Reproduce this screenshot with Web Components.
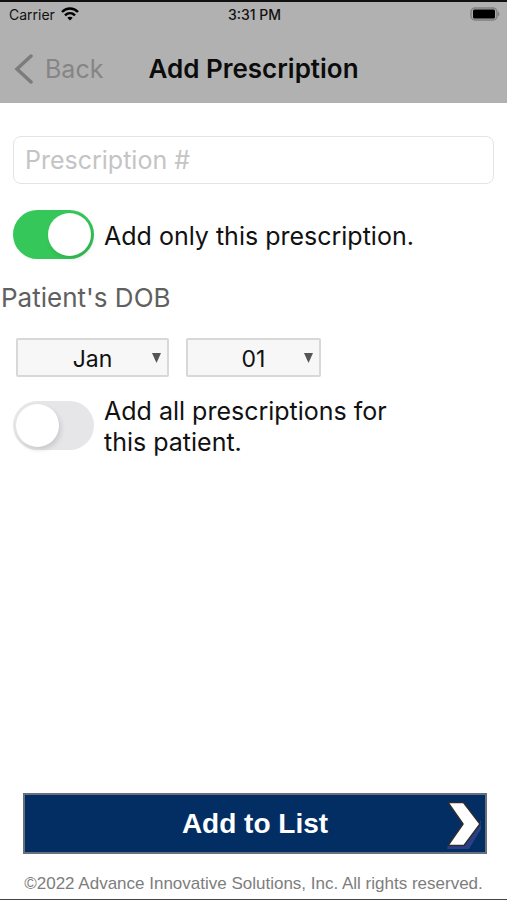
<!DOCTYPE html>
<html lang="en">
<head>
<meta charset="utf-8">
<meta name="viewport" content="width=device-width, initial-scale=1">
<title>Add Prescription</title>
<style>
  body {
    margin: 0;
    background: #fff;
    color: #111;
    font-family: Inter, "Liberation Sans", sans-serif;
    font-size: 25px;
  }
</style>
</head>
<body>
<rx-app></rx-app>

<script>
class StatusBar extends HTMLElement {
  constructor() {
    super();
    this.attachShadow({ mode: 'open' });
    this.render();
  }

  render() {
    this.shadowRoot.innerHTML = `
      <style>
        :host {
          display: grid;
          grid-template-columns: 1fr auto 1fr;
          align-items: center;
          height: 24px;
          padding: 0 7px 0 9px;
          font-size: 14px;
          color: #111;
        }
        .carrier { display: flex; align-items: center; gap: 6px; }
        .time { font-weight: 500; }
        .battery { justify-self: end; }
        svg { display: block; }
      </style>
      <span class="carrier">Carrier
        <svg width="18" height="14" viewBox="0 0 18 14" fill="none" stroke="#000" stroke-width="2.5" aria-hidden="true">
          <path d="M1 5C5.5.4 12.5.4 17 5"/>
          <path d="M4 8.400c2.900-2.800 7.100-2.800 10 0"/>
          <path d="M9 13.500 6.300 10.800c1.500-1.400 3.900-1.400 5.400 0Z" fill="#000" stroke="none"/>
        </svg>
      </span>
      <span class="time">3:31 PM</span>
      <svg class="battery" width="30" height="14" viewBox="0 0 30 14" aria-hidden="true">
        <rect x="1" y="1" width="26" height="12" rx="4" fill="#aaa" stroke="#808080" stroke-width="1.5"/>
        <rect x="3" y="2.500" width="22" height="9" rx="1.5" fill="#000"/>
        <path d="M28 4.500c2 1 2 4 0 5Z" fill="#808080"/>
      </svg>
    `;
  }
}

class NavBar extends HTMLElement {
  constructor() {
    super();
    this.attachShadow({ mode: 'open' });
    this.render();
  }

  render() {
    this.shadowRoot.innerHTML = `
      <style>
        :host {
          display: grid;
          grid-template-columns: 1fr auto 1fr;
          align-items: center;
          height: 69px;
          padding: 8px 14px 0;
        }
        button {
          display: flex;
          align-items: center;
          justify-self: start;
          gap: 12px;
          padding: 0;
          border: 0;
          background: none;
          font: inherit;
          color: #858585;
        }
        h1 { margin: 0; font-size: 26px; font-weight: 600; color: #0c0c0c; }
      </style>
      <button type="button">
        <svg width="19" height="30" viewBox="0 0 19 30" fill="none" stroke="#7c7c7c" stroke-width="3.5" stroke-linecap="round" aria-hidden="true">
          <path d="M17 2 3 15l14 13"/>
        </svg>
        Back
      </button>
      <h1><slot></slot></h1>
    `;
  }
}

class TextField extends HTMLElement {
  constructor() {
    super();
    this.attachShadow({ mode: 'open' });
    this.render();
  }

  get label() {
    return this.getAttribute('label');
  }

  render() {
    this.shadowRoot.innerHTML = `
      <style>
        :host { display: block; }
        input {
          display: block;
          box-sizing: border-box;
          width: 100%;
          height: 48px;
          padding: 0 11px;
          border: 1px solid #e4e4e4;
          border-radius: 8px;
          background: #fff;
          font: inherit;
          color: #111;
        }
        input::placeholder { color: #c4c4c6; opacity: 1; }
      </style>
      <input type="text" aria-label="${this.label}" placeholder="${this.label}">
    `;
  }
}

class ToggleRow extends HTMLElement {
  constructor() {
    super();
    this.attachShadow({ mode: 'open' });
    this.render();
  }

  render() {
    this.shadowRoot.innerHTML = `
      <style>
        :host { display: block; }
        label { display: flex; align-items: center; gap: 10px; }
        input {
          appearance: none;
          flex: none;
          display: flex;
          align-items: center;
          box-sizing: border-box;
          width: 81px;
          height: 49px;
          margin: 0;
          padding: 0 3px;
          border-radius: 25px;
          background: #e6e6e9;
        }
        input::before {
          content: "";
          width: 43px;
          height: 43px;
          border-radius: 50%;
          background: #fff;
          box-shadow: 2px 3px 5px rgba(0, 0, 0, .12);
        }
        input:checked { justify-content: flex-end; background: #35c759; }
        span { max-width: 320px; padding-top: 3px; line-height: 31px; }
      </style>
      <label>
        <input type="checkbox" role="switch" ${this.hasAttribute('on') ? 'checked' : ''}>
        <span><slot></slot></span>
      </label>
    `;
  }
}

class DobPicker extends HTMLElement {
  constructor() {
    super();
    this.attachShadow({ mode: 'open' });
    this.render();
  }

  render() {
    const months = ['Jan', 'Feb', 'Mar', 'Apr', 'May', 'Jun', 'Jul', 'Aug', 'Sep', 'Oct', 'Nov', 'Dec'];
    const days = Array.from({ length: 31 }, (_, i) => String(i + 1).padStart(2, '0'));
    const options = list => list.map(v => `<option>${v}</option>`).join('');
    const arrow = `
      <svg width="9" height="10" viewBox="0 0 9 10" aria-hidden="true">
        <path d="M0 0h9L4.500 10Z" fill="#555"/>
      </svg>`;

    this.shadowRoot.innerHTML = `
      <style>
        :host { display: block; }
        fieldset { margin: 0; padding: 0; border: 0; min-width: 0; }
        legend { padding: 0 1px; font-size: 26px; line-height: 30px; color: #606060; }
        .row { display: flex; gap: 17px; padding: 25px 16px 0; }
        .pick { position: relative; }
        .month { width: 153px; }
        .day { width: 135px; }
        select {
          appearance: none;
          display: block;
          width: 100%;
          height: 39px;
          padding: 3px 0 0;
          border: 2px solid #d8d8d8;
          border-radius: 2px;
          background: #f7f7f7;
          font: inherit;
          font-size: 23px;
          text-align: center;
          text-align-last: center;
          color: #111;
        }
        svg { position: absolute; right: 8px; top: 15px; pointer-events: none; }
      </style>
      <fieldset>
        <legend>Patient's DOB</legend>
        <div class="row">
          <div class="pick month"><select aria-label="Month">${options(months)}</select>${arrow}</div>
          <div class="pick day"><select aria-label="Day">${options(days)}</select>${arrow}</div>
        </div>
      </fieldset>
    `;
  }
}

class ActionButton extends HTMLElement {
  constructor() {
    super();
    this.attachShadow({ mode: 'open' });
    this.render();
  }

  render() {
    this.shadowRoot.innerHTML = `
      <style>
        :host { display: block; }
        button {
          display: grid;
          grid-template-columns: 1fr auto 1fr;
          align-items: center;
          width: 100%;
          height: 61px;
          padding: 0 3px;
          border: 2px solid #68707c;
          background: #022e64;
          font: bold 28px "Liberation Sans", Arial, sans-serif;
          color: #fff;
        }
        span { grid-column: 2; }
        svg { display: block; justify-self: end; }
      </style>
      <button type="button">
        <span><slot></slot></span>
        <svg width="38" height="52" viewBox="0 0 38 52" aria-hidden="true">
          <path d="M4 47 3 51h22l12-20V22l-6 11-10 14Z" fill="#2b3f86"/>
          <path d="M4 4.500h15.500L36 26 20 47.500H4L19 26Z" fill="#fff" stroke="#2c2c34" stroke-width="1.5" stroke-linejoin="round"/>
        </svg>
      </button>
    `;
  }
}

class RxApp extends HTMLElement {
  constructor() {
    super();
    this.attachShadow({ mode: 'open' });
    this.render();
  }

  render() {
    this.shadowRoot.innerHTML = `
      <style>
        :host {
          display: flex;
          flex-direction: column;
          box-sizing: border-box;
          min-height: 100vh;
          border-top: 2px solid #111;
          border-bottom: 1px solid #444;
        }
        header { background: #b1b1b1; }
        main { flex: 1; padding-top: 33px; }
        text-field, toggle-row { margin: 0 13px; }
        toggle-row { margin-top: 26px; }
        dob-picker { margin-top: 24px; }
        dob-picker + toggle-row { margin-top: 16px; }
        action-button { margin: 0 20px 0 23px; }
        small {
          display: block;
          padding: 19px 0 4px;
          text-align: center;
          font: 17px/22px "Liberation Sans", Arial, sans-serif;
          color: #7d7d7d;
        }
      </style>
      <header>
        <status-bar></status-bar>
        <nav-bar>Add Prescription</nav-bar>
      </header>
      <main>
        <text-field label="Prescription #"></text-field>
        <toggle-row on>Add only this prescription.</toggle-row>
        <dob-picker></dob-picker>
        <toggle-row>Add all prescriptions for this patient.</toggle-row>
      </main>
      <footer>
        <action-button>Add to List</action-button>
        <small>©2022 Advance Innovative Solutions, Inc. All rights reserved.</small>
      </footer>
    `;
  }
}

customElements.define('status-bar', StatusBar);
customElements.define('nav-bar', NavBar);
customElements.define('text-field', TextField);
customElements.define('toggle-row', ToggleRow);
customElements.define('dob-picker', DobPicker);
customElements.define('action-button', ActionButton);
customElements.define('rx-app', RxApp);
</script>
</body>
</html>
